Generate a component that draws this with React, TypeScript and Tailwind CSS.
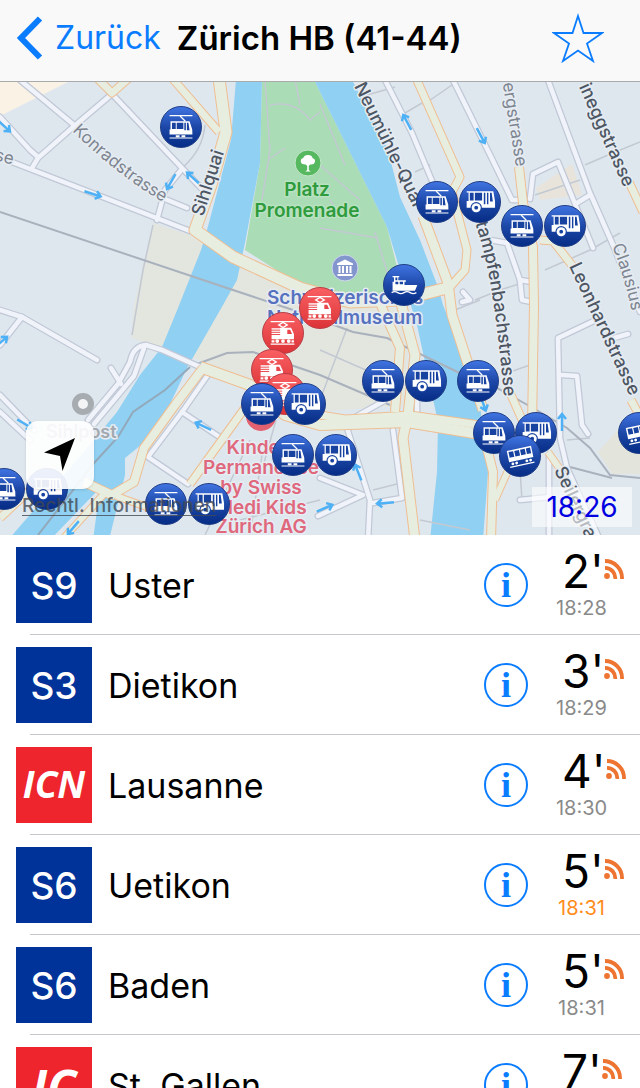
import React from "react";

type PinKind = "tram" | "bus" | "boat" | "train" | "funicular";

interface Pin {
  kind: PinKind;
  x: number;
  y: number;
}

const MAP_W = 640;
const MAP_TOP = 82;
const MAP_H = 453;

const pins: Pin[] = [
  { kind: "tram", x: 181, y: 127 },
  { kind: "tram", x: 437, y: 202 },
  { kind: "bus", x: 480, y: 202 },
  { kind: "tram", x: 522, y: 226 },
  { kind: "bus", x: 565, y: 226 },
  { kind: "boat", x: 404, y: 285 },
  { kind: "train", x: 320, y: 308 },
  { kind: "train", x: 283, y: 333 },
  { kind: "train", x: 272, y: 370 },
  { kind: "train", x: 285, y: 394 },
  { kind: "tram", x: 262, y: 404 },
  { kind: "bus", x: 305, y: 404 },
  { kind: "tram", x: 383, y: 381 },
  { kind: "bus", x: 426, y: 381 },
  { kind: "tram", x: 478, y: 381 },
  { kind: "bus", x: 536, y: 433 },
  { kind: "tram", x: 494, y: 433 },
  { kind: "funicular", x: 520, y: 456 },
  { kind: "funicular", x: 639, y: 433 },
  { kind: "tram", x: 293, y: 455 },
  { kind: "bus", x: 336, y: 455 },
  { kind: "tram", x: 4, y: 489 },
  { kind: "bus", x: 47, y: 489 },
  { kind: "tram", x: 166, y: 504 },
  { kind: "bus", x: 209, y: 504 },
];

const pinLabels: Record<PinKind, string> = {
  tram: "Tram",
  bus: "Bus",
  boat: "Schiff",
  train: "Zug",
  funicular: "Standseilbahn",
};

interface Departure {
  line: string;
  style: "s" | "icn" | "ic";
  to: string;
  minutes: number;
  time: string;
  late?: boolean;
}

const departures: Departure[] = [
  { line: "S9", style: "s", to: "Uster", minutes: 2, time: "18:28" },
  { line: "S3", style: "s", to: "Dietikon", minutes: 3, time: "18:29" },
  { line: "ICN", style: "icn", to: "Lausanne", minutes: 4, time: "18:30" },
  { line: "S6", style: "s", to: "Uetikon", minutes: 5, time: "18:31", late: true },
  { line: "S6", style: "s", to: "Baden", minutes: 5, time: "18:31" },
  { line: "IC", style: "ic", to: "St. Gallen", minutes: 7, time: "18:33" },
];

const badgeStyles = {
  s: "bg-[#003399] font-['Inter',sans-serif] text-[37px] font-medium",
  icn: "bg-[#ee252c] pb-1 font-['Open_Sans',sans-serif] text-[37px] font-bold italic",
  ic: "bg-[#ee252c] pt-1 font-['Open_Sans',sans-serif] text-[48px] font-bold italic",
};

function PinIcon({ kind }: { kind: PinKind }) {
  const dark = kind === "train" ? "#e8454a" : "#17429f";
  return (
    <svg viewBox="0 0 42 42" className="size-full" aria-hidden="true" fill="#fff">
      {kind === "tram" && (
        <g>
          <path d="M9 9h24M9 32.600h24" stroke="#fff" strokeWidth="1.200" />
          <path d="M20 9.500l5.500 5.500" stroke="#fff" strokeWidth="1.300" />
          <path d="M10 15h20l2.800 8.500L33 29H9v-5.500h1z" />
          <path d="M11.500 16.500h4v6.500h-4zM16.500 16.500h7v6.500h-7zM24.500 16.500h1.600v8h-1.600zM27.200 16.500h1.600l1.200 8h-2.800z" fill={dark} />
          <path d="M15.500 29.700h4v2h-4zM21.500 29.700h4v2h-4z" />
        </g>
      )}
      {kind === "bus" && (
        <g>
          <path d="M7 9.800h28l1.800 10.500V27H7v-7h2v-9H7z" />
          <path d="M10.300 11.400h4v8h-4zM15.600 11.400h7.600v8h-7.600zM25 11.400h1.600v12H25zM28.300 11.400h1.500v12h-1.500zM31.500 11.400h1.700l1.300 9h-3z" fill={dark} />
          <circle cx="17" cy="27" r="6" fill={dark} />
          <circle cx="17" cy="27" r="4.800" />
          <circle cx="17" cy="27" r="2" fill={dark} />
        </g>
      )}
      {kind === "train" && (
        <g>
          <path d="M8 9h25M8 32.600h25" stroke="#fff" strokeWidth="1.300" />
          <path d="M21 9.800l4.500 2.700-4.500 2.700-4.500-2.700z" fill="none" stroke="#fff" strokeWidth="1.400" />
          <path d="M18 15.500h11.500l3 6.500v5.500H9V16h9z" />
          <path d="M8 18h10M8 20.300h10M8 22.600h10" stroke={dark} strokeWidth="1" />
          <path d="M25.500 17.500h3l2 4.500h-5z" fill={dark} />
          <circle cx="15" cy="29.500" r="2" />
          <circle cx="21" cy="29.500" r="2" />
          <circle cx="27" cy="29.500" r="2" />
          <path d="M9 28.500h3v2.500H9zM30 28.500h2.500v2.500H30z" />
        </g>
      )}
      {kind === "boat" && (
        <g>
          <path d="M9 11.500h7v1.300h-1V16h8v1.500h-1.500V21H35l-2.500 6H9V17.500h1.500v-4.700H9z" />
          <path d="M12 13h2v3h-2zM12 17.700h3v2.500h-3zM16.500 17.700h3.500v2.500h-3.500z" fill={dark} />
          <path d="M8 29q3.300-2 6.500 0t6.500 0 6.500 0 6.500 0" fill="none" stroke="#fff" strokeWidth="1.400" />
        </g>
      )}
      {kind === "funicular" && (
        <g transform="rotate(-12 21 21)">
          <path d="M8.500 13h26v12h-26z" />
          <path d="M10 14.500h5v6h-5zM16.200 14.500h5v6h-5zM22.400 14.500h5v6h-5zM28.600 14.500h4.500v6h-4.500z" fill={dark} />
          <circle cx="12" cy="27.500" r="1.500" />
          <circle cx="16" cy="27.500" r="1.500" />
          <circle cx="27" cy="27.500" r="1.500" />
          <circle cx="31" cy="27.500" r="1.500" />
          <path d="M8.500 30.500h26" stroke="#fff" strokeWidth="1.300" />
        </g>
      )}
    </svg>
  );
}

function MapPin({ pin }: { pin: Pin }) {
  const colour =
    pin.kind === "train"
      ? "from-[#f95f62] to-[#dc3338] border-[#b93c44]"
      : "from-[#4074e2] via-[#1d48a8] to-[#062d86] border-[#1d3c86]";
  return (
    <button
      type="button"
      aria-label={pinLabels[pin.kind]}
      className={`absolute size-[42px] -translate-1/2 rounded-full border bg-linear-to-b ${colour}`}
      style={{
        left: `${(pin.x / MAP_W) * 100}%`,
        top: `${((pin.y - MAP_TOP) / MAP_H) * 100}%`,
      }}
    >
      <PinIcon kind={pin.kind} />
    </button>
  );
}

const sideStreets = [
  "M20 80L74 125",
  "M112 94L72 128L38 158L32 168",
  "M0 117L30 150L38 157",
  "M12 162L100 196L190 231",
  "M113 95L182 168L201 188",
  "M182 169L165 190L157 220",
  "M165 199L187 208",
  "M0 310L22 317L97 360",
  "M22 317L0 345",
  "M0 395L34 430",
  "M0 412L30 440",
  "M88 420L118 384L130 362Q133 346 146 345L162 350L200 367",
  "M94 424L134 376L144 348",
  "M111 368L121 384",
  "M210 372L182 412L148 457L188 484",
  "M182 412L224 440",
  "M385 80L412 133L440 200",
  "M453 80L495 165L512 200L522 200",
  "M548 80L590 193L613 245L640 312",
  "M530 199L533 174L558 162L593 248",
  "M577 203L590 195",
  "M490 240L507 243L520 280L532 282",
  "M520 280L522 300L532 302",
  "M598 319L558 338L560 438L567 468L600 540",
  "M562 375L577 376L582 425L588 434",
  "M520 500L550 497",
  "M549 455L549 540",
  "M347 428L370 500L368 540",
  "M393 430L402 498L373 503",
  "M320 478L363 495L318 516",
  "M357 416L384 401",
  "M417 400L417 425",
  "M463 292L470 300L462 302",
  "M614 338L628 334",
];

const mainRoads = [
  { d: "M97 78L112 93L129 78", w: 7 },
  { d: "M172 78L219 132", w: 7 },
  { d: "M219 78L226 132L211 185L195 230L233 257L300 288L350 302L400 300L447 288", w: 11 },
  { d: "M416 78L460 177L452 192L467 250L465 270L450 287", w: 7 },
  { d: "M423 216L448 283L452 315L483 410", w: 9 },
  { d: "M519 167L523 203L533 247L534 305L532 428", w: 8 },
  { d: "M540 240L553 241L575 269", w: 7 },
  { d: "M629 182L643 212", w: 7 },
  { d: "M200 367L250 385L285 415L320 425L407 422L480 434", w: 10 },
  { d: "M320 415L345 419L410 415L480 425", w: 7 },
  { d: "M203 368L175 405L144 448L134 482L112 495L84 482", w: 8 },
  { d: "M104 494L62 540", w: 6 },
  { d: "M116 496L155 510", w: 6 },
  { d: "M0 518L30 490", w: 7 },
  { d: "M247 405L190 484", w: 7 },
  { d: "M380 303L400 348L395 412", w: 8 },
  { d: "M401 303L415 355L408 415L403 438L415 540", w: 9 },
  { d: "M487 448L493 472L491 540", w: 8 },
  { d: "M510 466L495 500", w: 6 },
  { d: "M507 386L524 424", w: 7 },
  { d: "M548 452L562 472", w: 6 },
  { d: "M631 400L643 422", w: 7 },
];

const hairlines = [
  "M153 225L143 270L132 335",
  "M205 125Q203 150 182 168",
  "M265 80L270 150L262 200M270 105Q295 100 310 120L320 112M295 80L300 105M268 160L285 148",
  "M320 104L345 165M320 165L360 200M375 232L388 275M320 228L378 238M340 215L330 200",
  "M360 97L395 87M405 113L422 103M423 105L452 85M415 172L430 165",
  "M585 165L608 155L640 142M535 195L580 180M545 270L590 250L620 233",
  "M475 300L500 290L528 281M450 312L480 300",
  "M347 328L320 400M320 350L400 385",
  "M567 440L590 438M510 372L530 365",
  "M373 490L397 484M420 520L470 530M518 440L522 500",
  "M262 455L250 535M240 520L320 500M205 535L250 440M276 420L262 470",
];

const arrows: [number, number, number][] = [
  [4, 126, 42],
  [93, 194, 18],
  [171, 182, 120],
  [193, 178, 222],
  [407, 122, 242],
  [481, 136, 62],
  [203, 426, 205],
  [1, 342, -40],
  [25, 424, 30],
  [73, 528, 130],
  [562, 422, -90],
  [358, 472, 248],
  [385, 503, 175],
  [325, 508, -24],
  [483, 403, 70],
];

function CityMap() {
  return (
    <svg
      viewBox="0 82 640 453"
      preserveAspectRatio="xMidYMid slice"
      className="absolute inset-0 size-full font-['Inter',sans-serif]"
      role="img"
      aria-label="Karte Zürich HB"
    >
      <rect x="0" y="80" width="640" height="460" fill="#dfe7ee" />
      <path d="M0 80H72L0 116Z" fill="#fbf2e6" />
      <path d="M153 223L205 240L310 300L410 310L405 405L320 412L205 362L131 338L134 305Z" fill="#e3e5df" />
      <path d="M640 405L598 452L612 474L640 474Z" fill="#e3e4dc" />
      <path d="M536 188L572 164L582 195L540 200Z" fill="#e8e4dc" />
      <path d="M262 80H314L320 92L387 227L404 295L350 300L300 285L245 250L260 163Z" fill="#aadcb5" />
      <path
        d="M236 80L231 140L207 230L201 250L178 308L162 347L140 375L117 412L67 472L8 540H50L100 488L93 540H109L125 475V458L157 432L187 368L223 305L237 280L245 243L260 163L262 80Z"
        fill="#90d0f2"
      />
      <path
        d="M314 80H352L387 147L400 197L420 240L438 287L443 305L467 365L480 405L488 472L483 540H430L437 472L438 422L417 325L400 270L387 227L320 92Z"
        fill="#90d0f2"
      />

      <g fill="none" stroke="#c3c9d2" strokeWidth="1.500">
        {hairlines.map((d) => (
          <path key={d} d={d} />
        ))}
      </g>
      <g fill="none" stroke="#a9b1bd" strokeWidth="2">
        <path d="M0 212L233 290L293 310L353 332L387 338L470 378L497 388L533 408L567 428L590 448L610 475L640 478" />
        <path d="M197 364L227 353L253 352L320 375L390 405" />
        <path d="M570 467L612 478" />
        <path d="M190 367L165 390L133 412L118 437L95 462L38 535" stroke="#92a9bb" />
      </g>

      <g fill="none" strokeLinejoin="round" strokeLinecap="round">
        {sideStreets.map((d) => (
          <path key={d} d={d} stroke="#c1c8d6" strokeWidth="7" />
        ))}
        {sideStreets.map((d) => (
          <path key={d} d={d} stroke="#f0f3fa" strokeWidth="4.500" />
        ))}
      </g>
      <g fill="none" strokeLinejoin="round">
        {mainRoads.map((r) => (
          <path key={r.d} d={r.d} stroke="#efbe92" strokeWidth={r.w + 2} />
        ))}
        {mainRoads.map((r) => (
          <path key={r.d} d={r.d} stroke="#e7eee0" strokeWidth={r.w} />
        ))}
      </g>

      <g stroke="#4fb1f5" strokeWidth="2.500" fill="none">
        {arrows.map(([x, y, a]) => (
          <path key={`${x}-${y}`} d="M-9 0H8M3 -4L8 0L3 4" transform={`translate(${x} ${y}) rotate(${a})`} />
        ))}
      </g>

      <defs>
        <path id="konrad" d="M72 131Q118 176 166 204" />
        <path id="stampf" d="M452 158Q478 225 486 262Q496 305 504 397" />
        <path id="clausius" d="M612 246Q626 280 637 335" />
      </defs>
      <g stroke="#e6ecf2" strokeWidth="3" strokeLinejoin="round" paintOrder="stroke">
        <g fill="#7d8590" fontSize="17">
          <text>
            <textPath href="#konrad">Konradstrasse</textPath>
          </text>
          <text transform="translate(-6 160) rotate(14)">se</text>
          <text transform="translate(516 167) rotate(81)" textAnchor="end">
            ergstrasse
          </text>
          <text>
            <textPath href="#clausius">Clausius</textPath>
          </text>
        </g>
        <g fill="#4d5663" fontSize="18" fontWeight="500">
          <text transform="translate(203 217) rotate(-72)">Sihlquai</text>
          <text transform="translate(354 86) rotate(64)">Neumühle-Quai</text>
          <text transform="translate(624 188) rotate(66)" textAnchor="end">
            ineggstrasse
          </text>
          <text textAnchor="end">
            <textPath href="#stampf" startOffset="100%">
              Stampfenbachstrasse
            </textPath>
          </text>
          <text transform="translate(569 266) rotate(65)">Leonhardstrasse</text>
          <text transform="translate(554 470) rotate(65)">Seilergra</text>
        </g>
        <text x="46" y="438" fill="#a3a9b0" fontSize="18" fontWeight="600">
          Sihlpost
        </text>
        <g fontSize="19" fontWeight="600">
          <g textAnchor="middle" fill="#2e9b3c" stroke="#b9e2c1">
            <text x="307" y="196">Platz</text>
            <text x="307" y="217">Promenade</text>
          </g>
          <g fill="#5672bf">
            <text x="267" y="304">Schweizerisches</text>
            <text x="267" y="324">Nationalmuseum</text>
          </g>
          <g textAnchor="middle" fill="#df687d">
            <text x="257" y="454">Kinder</text>
            <text x="261" y="474">Permanence</text>
            <text x="261" y="494">by Swiss</text>
            <text x="261" y="514">Medi Kids</text>
            <text x="261" y="533">Zürich AG</text>
          </g>
        </g>
      </g>

      <circle cx="83" cy="404" r="8" fill="#f2f4f6" stroke="#a7acb1" strokeWidth="6" />
      <circle cx="261" cy="416" r="15" fill="#e2606f" />
      <circle cx="308" cy="163" r="13" fill="#56b85f" stroke="#c4e7ca" />
      <path
        d="M308 155q4 0 4.500 3q3 1 2.500 4q-1 3-5 2.500l-1.200 1.500v4l2 1.500h-5.600l2-1.500v-4l-1.500-1.500q-5 0-5-3.500q0-2.500 2.500-3q1-3 4.800-3z"
        fill="#fff"
      />
      <circle cx="345" cy="268" r="13" fill="#8296cd" stroke="#cfd8ec" />
      <path
        d="M345 259.500l8 4v1.500h-16v-1.500zM338.500 266h2v7h-2zM342 266h2v7h-2zM346 266h2v7h-2zM349.500 266h2v7h-2zM337.500 274h15v2h-15z"
        fill="#fff"
      />
    </svg>
  );
}

function InfoIcon() {
  return (
    <span className="flex size-11 items-center justify-center rounded-full border-2 border-[#0a7cff] font-['Liberation_Serif',serif] text-[36px] leading-none font-bold text-[#0a7cff]">
      i
    </span>
  );
}

function LiveIcon() {
  return (
    <svg viewBox="0 0 20 20" className="mb-1 size-5" fill="none" stroke="#ee7431" strokeWidth="3.800" aria-hidden="true">
      <circle cx="3" cy="17" r="2.900" fill="#ee7431" stroke="none" />
      <path d="M1 8.800A10.200 10.200 0 0 1 11.200 20" />
      <path d="M1 2A17 17 0 0 1 18 20" />
    </svg>
  );
}

function DepartureRow({ d }: { d: Departure }) {
  return (
    <li className="relative flex h-[100px] items-center pl-4">
      <span
        className={`flex size-[76px] shrink-0 items-center justify-center leading-none text-white ${badgeStyles[d.style]}`}
      >
        {d.line}
      </span>
      <span className="ml-4 flex-1 truncate pt-0.5 text-[34px] leading-[44px]">{d.to}</span>
      <button type="button" aria-label={`Info ${d.line} ${d.to}`} className="shrink-0">
        <InfoIcon />
      </button>
      <span className="ml-5 flex w-[92px] shrink-0 flex-col pb-1">
        <span className="flex items-center pl-3.5">
          <span className="text-[46px] leading-[50px]">{d.minutes}'</span>
          <LiveIcon />
        </span>
        <span
          className={`w-[67px] text-center text-[20px] leading-6 ${d.late ? "text-[#ff8c1a]" : "text-[#8a8a8a]"}`}
        >
          {d.time}
        </span>
      </span>
      <span className="absolute right-0 bottom-0 left-[30px] h-px bg-[#c8c7cc]" />
    </li>
  );
}

export default function App() {
  return (
    <main className="flex h-screen flex-col overflow-hidden bg-white font-['Inter',sans-serif] text-black">
      <header className="flex h-[82px] shrink-0 items-center border-b border-[#a7a9ab] bg-[#f9f9f9] pr-9 pb-1.5 pl-4">
        <button type="button" className="flex items-center gap-3 text-[32px] leading-[44px] text-[#0a7cff]">
          <svg viewBox="0 0 27 44" className="h-11 w-[27px]" fill="none" stroke="#0a7cff" strokeWidth="6" aria-hidden="true">
            <path d="M24 2.500L5 22L24 41.500" />
          </svg>
          Zurück
        </button>
        <h1 className="ml-4 flex-1 truncate text-[33px] leading-[44px] font-semibold">Zürich HB (41-44)</h1>
        <button type="button" aria-label="Favorit">
          <svg viewBox="0 0 52 50" className="h-[50px] w-[52px]" fill="none" stroke="#0a7cff" strokeWidth="1.800" aria-hidden="true">
            <path d="M26 3L31.500 20H50L35 30.500L41 48L26 37.500L11 48L17 30.500L2 20H20.500Z" />
          </svg>
        </button>
      </header>

      <section className="relative aspect-[640/453] w-full shrink-0 overflow-hidden">
        <CityMap />
        {pins.map((p) => (
          <MapPin key={`${p.x}-${p.y}`} pin={p} />
        ))}
        <a
          href="#rechtliches"
          className="absolute bottom-[17px] left-[22px] text-[19px] leading-6 font-medium text-[#414852]/80 underline underline-offset-3"
        >
          Rechtl. Informationen
        </a>
        <button
          type="button"
          aria-label="Mein Standort"
          className="absolute bottom-[46px] left-[26px] flex size-[68px] items-center justify-center rounded-xl bg-white/90 shadow"
        >
          <svg viewBox="0 0 32 34" className="h-[34px] w-8" aria-hidden="true">
            <path d="M31 0L0 14.500L16 18L18.500 33Z" fill="#000" />
          </svg>
        </button>
        <time className="absolute right-2 bottom-2 flex h-10 w-[100px] items-center justify-center bg-white/60 text-[28px] text-[#0000e0]">
          18:26
        </time>
      </section>

      <ul className="min-h-0 flex-1 overflow-y-auto [scrollbar-width:none]">
        {departures.map((d) => (
          <DepartureRow key={`${d.line}-${d.to}`} d={d} />
        ))}
      </ul>
    </main>
  );
}
